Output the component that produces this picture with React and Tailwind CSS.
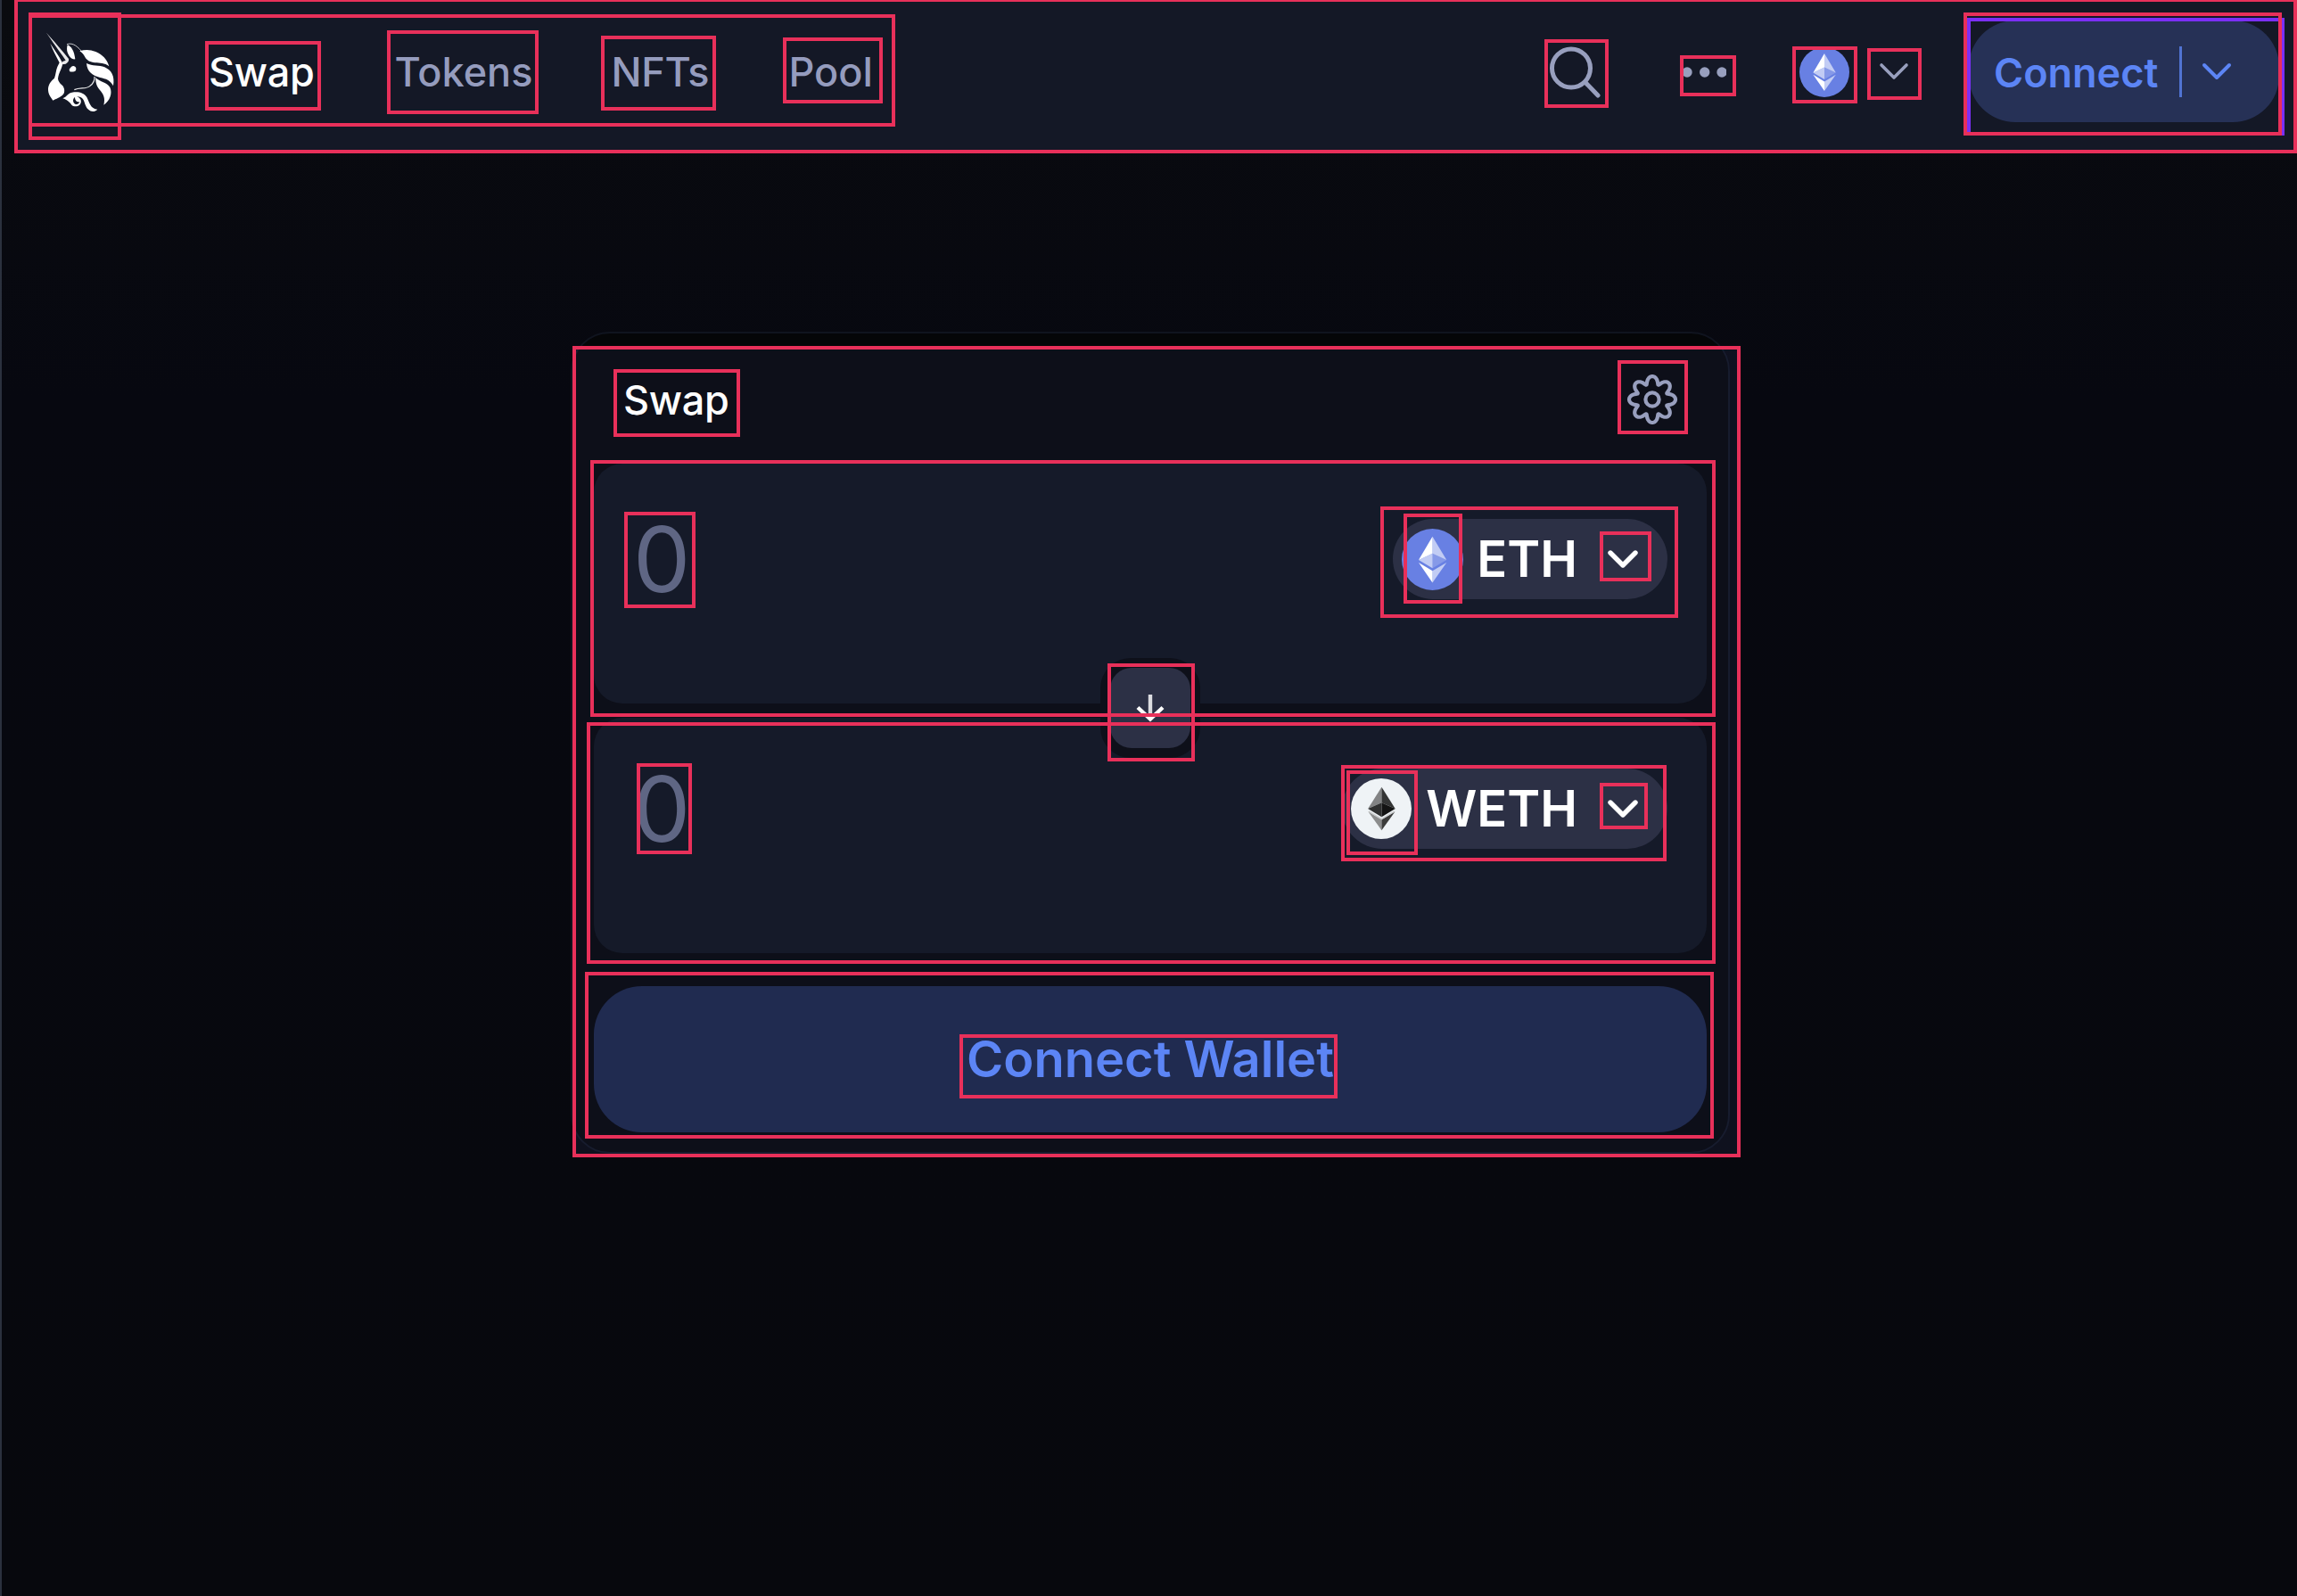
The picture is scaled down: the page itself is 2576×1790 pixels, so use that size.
import React from "react";

const MARKS = [
  [16, -2, 2576, 172],
  [32, 16, 1004, 142],
  [32, 14, 136, 157],
  [230, 46, 359.5, 124],
  [434, 34, 603.5, 127.5],
  [674, 40, 802.5, 124],
  [878, 42, 990, 116],
  [1732, 44, 1804, 121],
  [1884, 62, 1947, 108],
  [2010, 52, 2083, 116],
  [2094, 54, 2155, 112],
  [2202, 14, 2559, 152],
  [642, 388, 1952, 1298],
  [688, 414, 830, 490],
  [1814, 404, 1893, 487],
  [662, 516, 1924, 804],
  [700, 574, 780, 682],
  [1548, 568, 1882, 693],
  [1574, 576, 1640, 677],
  [1794, 596, 1852, 652],
  [658, 810, 1924, 1081],
  [714, 856, 776, 958],
  [1504, 858, 1869, 966],
  [1510, 864, 1590, 959],
  [1794, 878, 1848, 930],
  [1242, 744, 1340, 854],
  [656, 1090, 1922, 1277],
  [1076, 1160, 1500, 1232],
];

function Mark({ box, className = "border-[#e8305a]" }) {
  const [x1, y1, x2, y2] = box;
  return (
    <div
      className={`absolute border-4 ${className}`}
      style={{ left: x1, top: y1, width: x2 - x1, height: y2 - y1 }}
    />
  );
}

function Unicorn() {
  return (
    <svg className="w-[80px] h-[95px] block" viewBox="60 75 240 285" fill="none">
      <g fill="#fff">
        <path opacity=".9" d="M66 83C92 112 122 146 141 171C143 178 138 184 131 188L120 190L119 181L131 176C121 160 98 130 66 83Z" />
        <path d="M79 119C94 142 108 160 119 183C122 190 118 198 115 206C110 218 106 226 105 238C106 246 110 252 117 258C127 266 129 280 124 289C118 297 107 303 88 311C82 301 73 293 72 276C71 258 82 245 93 236C98 224 98 210 103 198L110 184C100 164 88 142 79 119Z" />
        <path d="M137 124C150 129 160 144 163 172C156 173 150 170 146 165C138 156 132 142 137 124Z" />
        <path d="M143 206C147 201 150 195 158 195C165 197 168 203 165 210C161 215 150 216 144 213Z" />
        <path d="M178 145C196 139 213 139 232 147C254 156 270 172 277 196C262 185 246 185 230 184C213 182 203 177 196 165C191 156 186 149 178 145Z" />
        <path d="M201 186C221 196 244 191 262 199C284 209 297 228 291 262C282 243 266 238 247 234C222 228 203 214 201 186Z" />
        <path d="M232 234C246 250 270 249 280 267C289 287 280 312 259 326C265 303 258 290 246 276C236 264 231 252 232 234Z" />
        <path d="M121 304C136 298 136 288 152 284C172 280 193 284 202 300C211 318 214 339 238 341C229 350 216 350 208 342C196 332 196 315 188 305C184 300 176 297 168 298C182 302 186 314 180 323C173 333 158 333 151 326C146 320 140 310 121 304ZM162 300C154 305 154 318 163 323C169 326 176 322 178 316C170 318 162 312 162 300Z" />
      </g>
      <path d="M135 122C156 115 172 130 190 152" stroke="#fff" strokeWidth="3" opacity=".75" />
      <path d="M160 275C180 266 199 274 213 262C224 254 229 246 228 231" stroke="#fff" strokeWidth="3.6" opacity=".9" />
    </svg>
  );
}

function EthIcon({ className }) {
  return (
    <svg className={`block shrink-0 ${className}`} viewBox="0 0 32 32">
      <circle cx="16" cy="16" r="16" fill="#6880e3" />
      <g fill="#fff">
        <path fillOpacity=".6" d="M16 4v8.87l7.3 3.35z" />
        <path d="M16 4L8.8 16.22l7.2-3.35z" />
        <path fillOpacity=".6" d="M16 21.97V28l7.3-10.38z" />
        <path d="M16 28v-6.03l-7.2-4.35z" />
        <path fillOpacity=".2" d="M16 20.57l7.3-4.35-7.3-3.35z" />
        <path fillOpacity=".6" d="M8.8 16.22l7.2 4.35v-7.7z" />
      </g>
    </svg>
  );
}

function WethIcon() {
  return (
    <svg className="block shrink-0 size-[68px]" viewBox="0 0 32 32">
      <circle cx="16" cy="16" r="16" fill="#eff3f6" />
      <path fill="#828384" d="M16.2 4.6L9 16l7.2-3.2z" />
      <path fill="#343535" d="M16.2 4.6L23.4 16l-7.2-3.2z" />
      <path fill="#2f3030" d="M16.2 12.8L9 16l7.2 4.3z" />
      <path fill="#141414" d="M16.2 12.8l7.2 3.2-7.2 4.3z" />
      <path fill="#8c8d8d" d="M9.2 17.6l7 4.1v5.7z" />
      <path fill="#3c3c3b" d="M23.2 17.6l-7 4.1v5.7z" />
      <path fill="none" stroke="#c9cbcc" strokeWidth=".7" d="M9.3 17.4l6.9 4.1 6.9-4.1" />
    </svg>
  );
}

function Chevron({ className, width = 4 }) {
  return (
    <svg className={`block shrink-0 w-[34px] h-[22px] ${className}`} viewBox="0 0 34 22" fill="none" stroke="currentColor" strokeWidth={width} strokeLinecap="round" strokeLinejoin="round">
      <path d="M3 4L17 18L31 4" />
    </svg>
  );
}

const gearPath =
  Array.from({ length: 160 }, (_, i) => {
    const t = (i / 160) * Math.PI * 2;
    const a = t + 0.06 * Math.sin(8 * t);
    const r = 21.8 + 4.2 * Math.cos(8 * t);
    return `${i ? "L" : "M"}${(30 + r * Math.sin(a)).toFixed(2)} ${(30 - r * Math.cos(a)).toFixed(2)}`;
  }).join("") + "Z";

function Gear() {
  return (
    <svg className="block size-[60px]" viewBox="0 0 60 60" fill="none" stroke="#989fbe" strokeWidth="4.2" strokeLinejoin="round">
      <path d={gearPath} />
      <circle cx="30" cy="30" r="7.6" />
    </svg>
  );
}

function Header() {
  return (
    <header className="ml-[16px] h-[170px] bg-[#141826] pb-[10px] flex items-center leading-none text-[45px] font-medium text-[#959cbe]">
      <div className="ml-[32px] w-[184px] pt-[3px]">
        <Unicorn />
      </div>
      <nav className="flex">
        <a className="w-[208.5px] text-white tracking-[-0.3px]">Swap</a>
        <a className="w-[243px]">Tokens</a>
        <a className="w-[199px] tracking-[-0.3px]">NFTs</a>
        <a>Pool</a>
      </nav>
      <div className="ml-auto mr-[20px] flex items-center">
        <svg className="block w-[60px] h-[60px]" viewBox="0 0 60 60" fill="none" stroke="#989fbe" strokeWidth="5" strokeLinecap="round">
          <circle cx="26" cy="26.5" r="21.5" />
          <path d="M42 42.5L56 57" />
        </svg>
        <svg className="block w-[50px] h-[12px] ml-[90px] mt-[1px]" viewBox="0 0 50 12" fill="#989fbe">
          <circle cx="6" cy="6" r="5.7" />
          <circle cx="25.7" cy="6" r="5.7" />
          <circle cx="45" cy="6" r="5.7" />
        </svg>
        <EthIcon className="size-[56px] ml-[82px] mt-[2px]" />
        <Chevron className="ml-[33px] text-[#989fbe]" width={3.6} />
        <button className="ml-[67px] w-[348px] h-[114px] rounded-[52px] bg-[#263156] text-[#5c85f5] font-semibold flex items-center pl-[28px]">
          <span className="w-[208px] text-left pt-[2px]">Connect</span>
          <span className="w-[3px] h-[57px] bg-[#5073d2]" />
          <Chevron className="ml-[22px]" />
        </button>
      </div>
    </header>
  );
}

function Amount({ token, icon, pillClass, className }) {
  return (
    <section className={`rounded-[32px] bg-[#151a29] px-[44px] ${className}`}>
      <div className="flex h-[90px] items-center justify-between leading-none">
        <span className="text-[102px] font-[370] text-[#5f6684]">0</span>
        <button className={`flex items-center h-[90px] rounded-[45px] bg-[#2c3045] pl-[10px] pr-[33px] text-[56px] font-semibold text-white ${pillClass}`}>
          {icon}
          <span className="ml-auto mr-[34px]">{token}</span>
          <Chevron width={5.4} />
        </button>
      </div>
    </section>
  );
}

function SwapCard() {
  return (
    <main className="relative mt-[202px] ml-[638px] w-[1300px] h-[922px] rounded-[44px] border-2 border-[#10141f] bg-[#050608]">
      <div className="absolute left-[2px] top-[16px] w-[1306px] h-[906px] bg-[rgba(105,113,205,0.09)]" />
      <div className="relative px-[24px]">
        <div className="flex items-center justify-between h-[146px] pt-[2px] pl-[33px] pr-[31px] text-[45px] leading-none font-medium text-white">
          <h1 className="tracking-[-0.3px]">Swap</h1>
          <Gear />
        </div>
        <Amount token="ETH" className="h-[269px] pt-[62px]" pillClass="w-[308px]" icon={<EthIcon className="size-[69px]" />} />
        <Amount token="WETH" className="mt-[16px] h-[264px] pt-[57px]" pillClass="w-[365px]" icon={<WethIcon />} />
        <button className="mt-[37px] block w-full h-[164px] rounded-[54px] bg-[#202b50] text-[56px] leading-none font-semibold text-[#5c85f5]">
          Connect Wallet
        </button>
      </div>
      <div className="absolute left-[592px] top-[364px] size-[112px] rounded-[34px] bg-[#0e101a] p-[11px]">
        <div className="size-[90px] rounded-[24px] bg-[#2c3045] flex items-center justify-center">
          <svg className="block w-[34px] h-[34px]" viewBox="0 0 34 34" fill="none" strokeWidth="4.4">
            <path d="M17 2V28" stroke="#dcdde1" />
            <path d="M3 16.5L17 29.5L31 16.5" stroke="#fff" />
          </svg>
        </div>
      </div>
    </main>
  );
}

export default function App() {
  return (
    <div className="relative flow-root w-[2576px] h-[1790px] overflow-hidden border-l-2 border-[#2b313e] bg-linear-to-b from-[#0a0b0f] via-[#070810] via-25% to-[#07080d] font-['Inter',sans-serif] font-normal">
      <Header />
      <SwapCard />
      <div className="absolute inset-y-0 -left-[2px] w-[2578px] pointer-events-none">
        <Mark box={[2206, 20, 2562, 152]} className="border-[#7b2ff7]" />
        {MARKS.map((box) => (
          <Mark key={box.join()} box={box} />
        ))}
      </div>
    </div>
  );
}
